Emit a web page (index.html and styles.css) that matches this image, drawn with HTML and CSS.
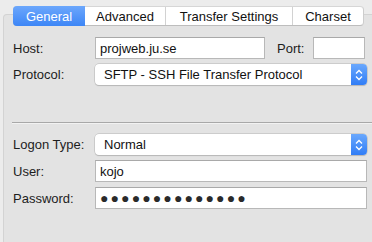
FILE: index.html
```html
<!DOCTYPE html>
<html>
<head>
    <title>Site Manager - General</title>
    <meta charset="utf-8">
    <link rel="stylesheet" href="styles.css">
</head>
<body>
    <!-- TAB BAR -->
    <div class="tabs">
        <div class="tab active">General</div>
        <div class="tab tab-advanced">Advanced</div>
        <div class="tab tab-transfer">Transfer Settings</div>
        <div class="tab tab-charset">Charset</div>
    </div>

    <div class="panel">
        <div class="form-grid">
            <label>Host:</label>
            <div class="host-row">
                <input class="field host" type="text" value="projweb.ju.se">
                <label class="port-label">Port:</label>
                <input class="field port" type="text" value="">
            </div>

            <label>Protocol:</label>
            <div class="select">
                <span class="select-text">SFTP - SSH File Transfer Protocol</span>
                <span class="stepper">
                    <svg width="8" height="12" viewBox="0 0 8 12">
                        <path d="M1 4.5 L4 1.5 L7 4.5 M1 7.5 L4 10.5 L7 7.5" fill="none" stroke="#fff" stroke-width="1.3"/>
                    </svg>
                </span>
            </div>
        </div>

        <div class="divider"></div>

        <div class="form-grid">
            <label>Logon Type:</label>
            <div class="select">
                <span class="select-text">Normal</span>
                <span class="stepper">
                    <svg width="8" height="12" viewBox="0 0 8 12">
                        <path d="M1 4.5 L4 1.5 L7 4.5 M1 7.5 L4 10.5 L7 7.5" fill="none" stroke="#fff" stroke-width="1.3"/>
                    </svg>
                </span>
            </div>

            <label>User:</label>
            <input class="field" type="text" value="kojo">

            <label>Password:</label>
            <div class="field password">&#9679;&#9679;&#9679;&#9679;&#9679;&#9679;&#9679;&#9679;&#9679;&#9679;&#9679;&#9679;&#9679;&#9679;</div>
        </div>
    </div>
</body>
</html>
```

FILE: styles.css
```css
body {
    margin: 0;
    width: 372px;
    height: 242px;
    overflow: hidden;
    background-color: #ececec;
    font-family: "Liberation Sans", Arial, sans-serif;
    font-size: 13px;
    color: #1d1d1d;
}

/* Segmented tab control */
.tabs {
    position: relative;
    z-index: 1;
    display: flex;
    width: 351px;
    height: 20px;
    margin: 6px 0 0 13px;
    background: #ffffff;
    border: 1px solid #cdcdcd;
    border-top-color: #d6d6d6;
    border-bottom-color: #bdbdbd;
    border-radius: 4px;
    box-sizing: border-box;
}

.tab {
    display: flex;
    align-items: center;
    justify-content: center;
    border-left: 1px solid #d2d2d2;
    color: #111;
    line-height: 1;
}

.tab.active {
    width: 72px;
    margin: -1px 0 -1px -1px;
    border: none;
    border-radius: 4px 0 0 4px;
    background: linear-gradient(#6ca7fc, #3d86f6);
    color: #ffffff;
}

.tab-advanced {
    width: 80px;
    border-left: none;
}

.tab-transfer {
    width: 126px;
}

.tab-charset {
    flex: 1;
}

/* Panel behind the tabs */
.panel {
    box-sizing: border-box;
    margin: -12px -12px 0 3px;
    padding: 22px 0 0 0;
    height: 228px;
    background: #e3e3e3;
    border: 1px solid #d3d3d3;
    border-bottom: none;
    border-radius: 4px 4px 0 0;
}

.form-grid {
    display: grid;
    grid-template-columns: 82px 272px;
    row-gap: 5px;
    padding-left: 9px;
    align-items: center;
}

label {
    color: #1d1d1d;
}

.host-row {
    display: flex;
    align-items: center;
}

.field {
    height: 22px;
    margin: 0;
    padding: 0 4px;
    border: 1px solid #b8b8b8;
    border-top-color: #a9a9a9;
    background: #ffffff;
    font-family: inherit;
    font-size: 13px;
    color: #111;
    box-sizing: border-box;
    outline: none;
}

.host {
    width: 170px;
}

.port-label {
    margin: 0 9px 0 12px;
}

.port {
    width: 52px;
}

.password {
    display: flex;
    align-items: center;
    padding-left: 4px;
    font-size: 14px;
    letter-spacing: 2.1px;
    color: #2a2a2a;
    overflow: hidden;
}

/* Popup button look */
.select {
    display: flex;
    height: 21px;
    background: #ffffff;
    border-radius: 4px;
    box-shadow: 0 0 0 0.5px #b5b5b5, 0 1px 1px rgba(0, 0, 0, 0.18);
    overflow: hidden;
}

.select-text {
    flex: 1;
    display: flex;
    align-items: center;
    padding-left: 9px;
    color: #111;
}

.stepper {
    width: 16px;
    display: flex;
    align-items: center;
    justify-content: center;
    background: linear-gradient(#6aa8fd, #317df6);
}

.divider {
    margin: 37px 4px 10px 8px;
    border-top: 1px solid #a8a8a8;
    border-bottom: 1px solid #f2f2f2;
}
```
